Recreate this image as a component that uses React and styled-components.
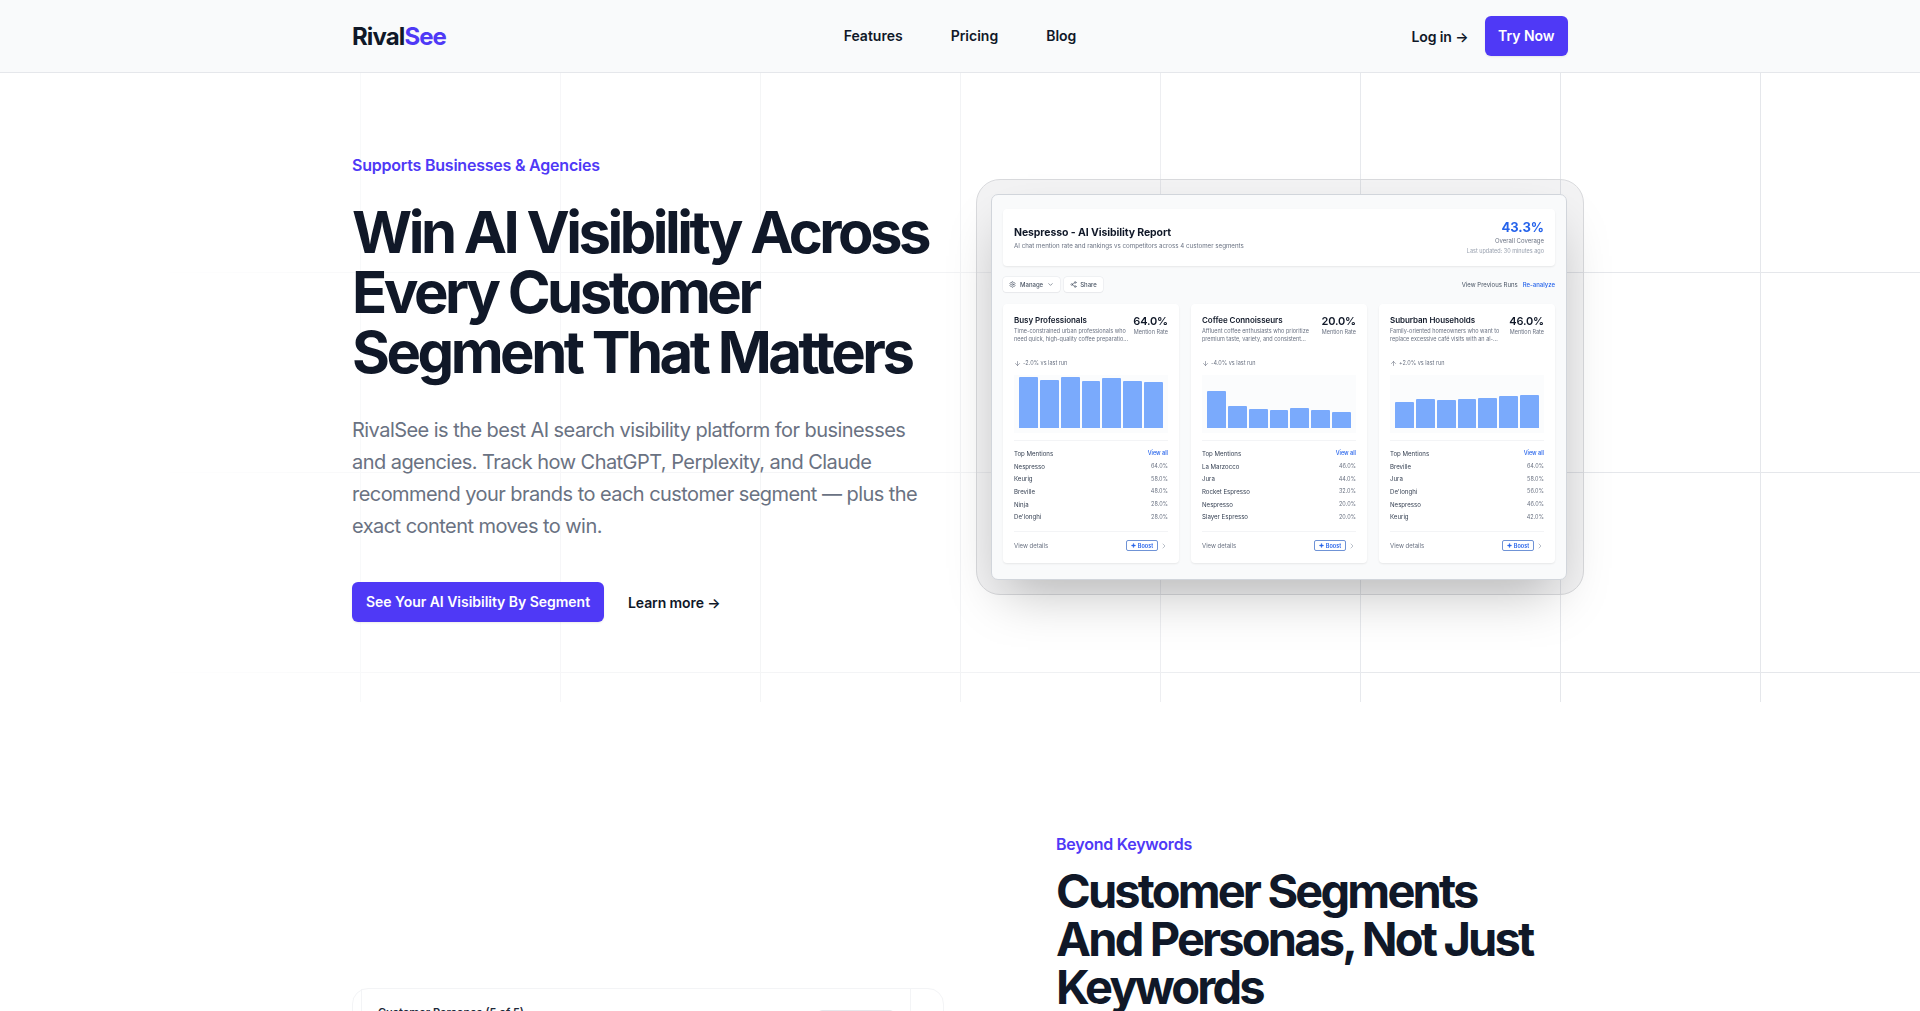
import React from "react";
import styled, { createGlobalStyle } from "styled-components";
import { ArrowDown, ArrowUp, ChevronDown, ChevronRight, Settings, Share2, Sparkle } from "lucide-react";

const GlobalStyle = createGlobalStyle`
    html, body { margin: 0; padding: 0; background: #fff; }
    body { font-family: Inter, "Liberation Sans", sans-serif; color: #101828; overflow: hidden; height: 1011px; }
    * { box-sizing: border-box; }
`;

const Nav = styled.header`
    height: 73px;
    background: #f9fafb;
    border-bottom: 1px solid #e5e7eb;
`;
const Wrap = styled.div`
    width: 1216px;
    margin: 0 auto;
`;
const NavInner = styled(Wrap)`
    height: 72px;
    display: grid;
    grid-template-columns: 1fr auto 1fr;
    align-items: center;
`;
const Logo = styled.div`
    font-size: 24px;
    font-weight: 700;
    letter-spacing: -0.9px;
    span { color: #4f39f6; }
`;
const NavLinks = styled.nav`
    display: flex;
    gap: 48px;
    font-size: 14px;
    line-height: 20px;
    margin-top: -1px;
    font-weight: 600;
`;
const NavRight = styled.div`
    display: flex;
    justify-content: flex-end;
    align-items: center;
    gap: 16px;
    font-size: 14px;
    font-weight: 600;
    letter-spacing: -0.1px;
`;
const PrimaryButton = styled.a`
    display: inline-flex;
    align-items: center;
    height: 40px;
    padding: 0 ${(props) => props.$pad}px 1px;
    border-radius: 6px;
    background: #4f39f6;
    color: #fff;
    font-size: 14px;
    font-weight: 600;
    letter-spacing: -0.03px;
    box-shadow: 0 1px 2px rgba(0, 0, 0, 0.08);
`;
const Hero = styled.section`
    position: relative;
    height: 629px;
    overflow: hidden;
    &::before {
        content: "";
        position: absolute;
        inset: 0;
        background-image:
            linear-gradient(to right, #e5e7eb 1px, transparent 1px),
            linear-gradient(to bottom, #e5e7eb 1px, transparent 1px);
        background-size: 200px 200px;
        background-position: 160px -1px;
        -webkit-mask-image: linear-gradient(to right, transparent 8%, rgba(0, 0, 0, 0.3) 20%, rgba(0, 0, 0, 0.5) 50%, #000 75%);
        mask-image: linear-gradient(to right, transparent 8%, rgba(0, 0, 0, 0.3) 20%, rgba(0, 0, 0, 0.5) 50%, #000 75%);
    }
`;
const HeroInner = styled(Wrap)`
    position: relative;
    display: grid;
    grid-template-columns: 592px 608px;
    column-gap: 32px;
    padding-top: 80px;
`;
const Eyebrow = styled.div`
    font-size: 16px;
    line-height: 24px;
    font-weight: 600;
    letter-spacing: -0.22px;
    color: #4f39f6;
`;
const Title = styled.h1`
    margin: 25px 0 0;
    font-size: 58px;
    line-height: 60px;
    font-weight: 700;
    letter-spacing: -3.5px;
`;
const Lead = styled.p`
    margin: 32px 0 0;
    max-width: 575px;
    font-size: 20px;
    line-height: 32px;
    letter-spacing: -0.55px;
    color: #6a7282;
`;
const Actions = styled.div`
    display: flex;
    align-items: center;
    gap: 24px;
    margin-top: 40px;
`;
const TextLink = styled.a`
    font-size: 14px;
    font-weight: 600;
    letter-spacing: -0.1px;
`;
const Frame = styled.div`
    margin-top: 26px;
    width: 608px;
    height: 416px;
    padding: 14px 16px 14px 14px;
    border-radius: 24px;
    border: 1px solid #d9dadd;
    background: rgba(17, 24, 39, 0.05);
`;
const Screen = styled.div`
    height: 386px;
    padding: 14px 11px 0;
    border-radius: 7px;
    border: 1px solid #d1d5db;
    background: #f9fafb;
    filter: blur(0.3px);
    box-shadow: 0 25px 50px -12px rgba(0, 0, 0, 0.25);
`;
const ReportHead = styled.div`
    height: 57px;
    padding: 0 11px;
    display: flex;
    justify-content: space-between;
    align-items: center;
    background: #fff;
    border-radius: 4px;
    box-shadow: 0 1px 2px rgba(0, 0, 0, 0.08);
`;
const ReportTitle = styled.div`
    font-size: 10.5px;
    line-height: 14px;
    font-weight: 700;
    letter-spacing: -0.1px;
`;
const ReportSub = styled.div`
    margin-top: 1px;
    font-size: 6.2px;
    line-height: 9px;
    color: #6a7282;
`;
const Coverage = styled.div`
    text-align: right;
    font-size: 6px;
    line-height: 10px;
    color: #6a7282;
`;
const CoverageValue = styled.div`
    font-size: 13px;
    line-height: 17px;
    font-weight: 700;
    color: #2563eb;
`;
const Faint = styled.div`
    color: #99a1af;
    font-size: 5.5px;
`;
const Toolbar = styled.div`
    height: 15px;
    margin: 11px 0 12px;
    display: flex;
    align-items: center;
    gap: 4px;
`;
const ToolButton = styled.div`
    height: 15px;
    padding: 0 6px;
    display: flex;
    align-items: center;
    gap: ${(props) => props.$gap}px;
    background: #fff;
    border-radius: 3px;
    font-size: 6px;
    font-weight: 500;
    color: #4a5565;
    box-shadow: 0 0 0 0.5px #e5e7eb, 0 1px 1px rgba(0, 0, 0, 0.06);
`;
const ToolLinks = styled.div`
    margin-left: auto;
    display: flex;
    gap: 5px;
    font-size: 6px;
    color: #4a5565;
    b { font-weight: 500; color: #2563eb; }
`;
const Cards = styled.div`
    display: grid;
    grid-template-columns: repeat(3, 176px);
    column-gap: 12px;
`;
const Card = styled.div`
    height: 259px;
    padding: 10px 11px 0;
    background: #fff;
    border-radius: 4px;
    box-shadow: 0 1px 2px rgba(0, 0, 0, 0.08);
`;
const CardTop = styled.div`
    display: flex;
    justify-content: space-between;
    height: 43px;
`;
const CardInfo = styled.div`
    width: 116px;
`;
const CardName = styled.div`
    font-size: 8px;
    line-height: 12px;
    font-weight: 600;
    letter-spacing: -0.05px;
`;
const CardDesc = styled.div`
    margin-top: 2px;
    font-size: 5.5px;
    line-height: 7.5px;
    color: #6a7282;
`;
const Rate = styled.div`
    padding-top: 1px;
    text-align: right;
    font-size: 5.5px;
    line-height: 8px;
    color: #6a7282;
`;
const RateValue = styled.div`
    font-size: 11px;
    line-height: 13px;
    font-weight: 600;
    letter-spacing: -0.15px;
    color: #101828;
`;
const Delta = styled.div`
    height: 10px;
    margin-top: 1px;
    display: flex;
    align-items: center;
    gap: 2px;
    font-size: 5.5px;
    color: #6a7282;
`;
const Chart = styled.div`
    height: 58px;
    margin-top: 7px;
    padding: 0 5px 5px;
    display: flex;
    align-items: flex-end;
    gap: 2px;
    background: #fbfcfd;
`;
const Bar = styled.div`
    flex: 1;
    background: #7aaafc;
    border-radius: 1px 1px 0 0;
    height: ${(props) => props.$h}px;
`;
const Mentions = styled.div`
    margin-top: 7px;
    padding-top: 6px;
    height: 91px;
    border-top: 0.5px solid #f3f4f6;
    font-size: 6.1px;
    color: #364153;
`;
const MentionRow = styled.div`
    height: 12.7px;
    display: flex;
    justify-content: space-between;
    align-items: center;
    span { font-size: 5.5px; color: #6a7282; }
    a { font-size: 5.5px; color: #2563eb; font-weight: 500; }
`;
const CardFoot = styled.div`
    height: 28px;
    border-top: 0.5px solid #f3f4f6;
    display: flex;
    align-items: center;
    font-size: 6px;
    color: #6a7282;
`;
const Boost = styled.div`
    margin-left: auto;
    width: 32px;
    height: 11.5px;
    display: flex;
    align-items: center;
    justify-content: center;
    gap: 2px;
    border: 0.5px solid #6f93d6;
    border-radius: 2px;
    font-size: 5.5px;
    font-weight: 600;
    color: #2563eb;
`;
const Chevron = styled(ChevronRight)`
    margin-left: 2px;
    color: #99a1af;
`;
const Second = styled(Wrap)`
    display: grid;
    grid-template-columns: 592px 1fr;
    column-gap: 112px;
    padding-top: 130px;
    height: 309px;
    overflow: hidden;
`;
const PersonaFrame = styled.div`
    margin-top: 156px;
    height: 200px;
    padding: 0 32px 0 8px;
    border: 1px solid #f3f4f6;
    border-radius: 16px;
`;
const PersonaPanel = styled.div`
    height: 100%;
    padding: 17px 16px;
    display: flex;
    justify-content: space-between;
    border: solid #f3f4f6;
    border-width: 0 1px;
`;
const PersonaTitle = styled.div`
    font-size: 11px;
    line-height: 12px;
    font-weight: 600;
    color: #1e2939;
`;
const PersonaButton = styled.div`
    width: 76px;
    height: 24px;
    margin-top: 4px;
    border: 1px solid #e5e7eb;
    border-radius: 4px;
`;
const SecondTitle = styled.h2`
    margin: 11px 0 0;
    font-size: 47px;
    line-height: 48px;
    font-weight: 700;
    letter-spacing: -2.85px;
`;

const cards = [
    {
        name: "Busy Professionals",
        desc: "Time-constrained urban professionals who need quick, high-quality coffee preparatio...",
        rate: "64.0%",
        delta: "-2.0%",
        up: false,
        bars: [51, 48, 51, 47, 50, 47, 46],
        mentions: [["Nespresso", "64.0%"], ["Keurig", "58.0%"], ["Breville", "48.0%"], ["Ninja", "28.0%"], ["De'longhi", "28.0%"]],
    },
    {
        name: "Coffee Connoisseurs",
        desc: "Affluent coffee enthusiasts who prioritize premium taste, variety, and consistent...",
        rate: "20.0%",
        delta: "-4.0%",
        up: false,
        bars: [37, 22, 19, 18, 20, 18, 16],
        mentions: [["La Marzocco", "46.0%"], ["Jura", "44.0%"], ["Rocket Espresso", "32.0%"], ["Nespresso", "20.0%"], ["Slayer Espresso", "20.0%"]],
    },
    {
        name: "Suburban Households",
        desc: "Family-oriented homeowners who want to replace excessive café visits with an al-...",
        rate: "46.0%",
        delta: "+2.0%",
        up: true,
        bars: [26, 29, 28, 29, 30, 32, 33],
        mentions: [["Breville", "64.0%"], ["Jura", "58.0%"], ["De'longhi", "56.0%"], ["Nespresso", "46.0%"], ["Keurig", "42.0%"]],
    },
];

const SegmentCard = ({ card }) => (
    <Card>
        <CardTop>
            <CardInfo>
                <CardName>{card.name}</CardName>
                <CardDesc>{card.desc}</CardDesc>
            </CardInfo>
            <Rate>
                <RateValue>{card.rate}</RateValue>
                Mention Rate
            </Rate>
        </CardTop>
        <Delta>
            {card.up ? <ArrowUp size={7} /> : <ArrowDown size={7} />}
            {card.delta} vs last run
        </Delta>
        <Chart>
            {card.bars.map((h, i) => (
                <Bar key={i} $h={h} />
            ))}
        </Chart>
        <Mentions>
            <MentionRow>
                Top Mentions
                <a>View all</a>
            </MentionRow>
            {card.mentions.map(([brand, value]) => (
                <MentionRow key={brand}>
                    {brand}
                    <span>{value}</span>
                </MentionRow>
            ))}
        </Mentions>
        <CardFoot>
            View details
            <Boost>
                <Sparkle size={5} fill="currentColor" />
                Boost
            </Boost>
            <Chevron size={8} />
        </CardFoot>
    </Card>
);

const App = () => (
    <>
        <GlobalStyle />
        <Nav>
            <NavInner>
                <Logo>
                    Rival<span>See</span>
                </Logo>
                <NavLinks>
                    <a>Features</a>
                    <a>Pricing</a>
                    <a>Blog</a>
                </NavLinks>
                <NavRight>
                    <a>Log in →</a>
                    <PrimaryButton $pad={13.5}>Try Now</PrimaryButton>
                </NavRight>
            </NavInner>
        </Nav>
        <Hero>
            <HeroInner>
                <div>
                    <Eyebrow>Supports Businesses &amp; Agencies</Eyebrow>
                    <Title>
                        Win AI Visibility Across Every Customer Segment That Matters
                    </Title>
                    <Lead>
                        RivalSee is the best AI search visibility platform for businesses and agencies. Track how ChatGPT, Perplexity, and Claude recommend your brands to each customer segment — plus the exact content moves to win.
                    </Lead>
                    <Actions>
                        <PrimaryButton $pad={14}>See Your AI Visibility By Segment</PrimaryButton>
                        <TextLink>Learn more →</TextLink>
                    </Actions>
                </div>
                <Frame>
                    <Screen>
                        <ReportHead>
                            <div>
                                <ReportTitle>Nespresso - AI Visibility Report</ReportTitle>
                                <ReportSub>AI chat mention rate and rankings vs competitors across 4 customer segments</ReportSub>
                            </div>
                            <Coverage>
                                <CoverageValue>43.3%</CoverageValue>
                                Overall Coverage
                                <Faint>Last updated: 30 minutes ago</Faint>
                            </Coverage>
                        </ReportHead>
                        <Toolbar>
                            <ToolButton $gap={4}>
                                <Settings size={7} />
                                Manage
                                <ChevronDown size={7} />
                            </ToolButton>
                            <ToolButton $gap={3}>
                                <Share2 size={7} />
                                Share
                            </ToolButton>
                            <ToolLinks>
                                View Previous Runs
                                <b>Re-analyze</b>
                            </ToolLinks>
                        </Toolbar>
                        <Cards>
                            {cards.map((card) => (
                                <SegmentCard key={card.name} card={card} />
                            ))}
                        </Cards>
                    </Screen>
                </Frame>
            </HeroInner>
        </Hero>
        <Second>
            <PersonaFrame>
                <PersonaPanel>
                    <PersonaTitle>Customer Personas (5 of 5)</PersonaTitle>
                    <PersonaButton />
                </PersonaPanel>
            </PersonaFrame>
            <div>
                <Eyebrow>Beyond Keywords</Eyebrow>
                <SecondTitle>Customer Segments And Personas, Not Just Keywords</SecondTitle>
            </div>
        </Second>
    </>
);

export default App;
